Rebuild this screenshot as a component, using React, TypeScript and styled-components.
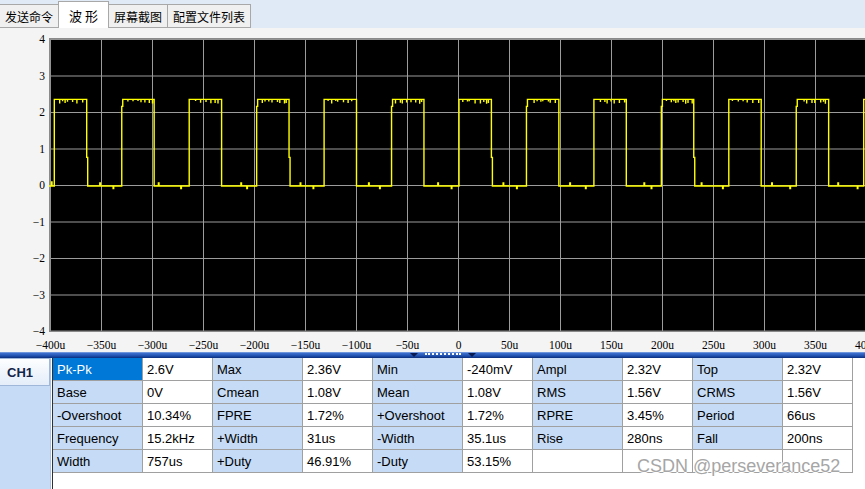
import React from 'react';
import styled, { createGlobalStyle } from 'styled-components';

const GlobalStyle = createGlobalStyle`
  html, body {
    margin: 0;
    padding: 0;
    overflow: hidden;
    background: #f4f4f4;
  }
`;

const Window = styled.div`
  width: 865px;
  height: 489px;
  display: flex;
  flex-direction: column;
  overflow: hidden;
  background: #f4f4f4;
  font-family: "Liberation Sans", Arial, sans-serif;
`;

const TabBar = styled.div`
  height: 28px;
  flex: none;
  display: flex;
  align-items: flex-end;
  background: #e0eaf7;
  box-sizing: border-box;
`;

const Tab = styled.div<{ $active?: boolean }>`
  height: ${p => (p.$active ? 27 : 24)}px;
  padding: 0 ${p => (p.$active ? 10 : 5)}px;
  margin-left: -1px;
  display: flex;
  align-items: center;
  box-sizing: border-box;
  background: ${p => (p.$active ? '#ffffff' : '#f0f0f0')};
  border: 1px solid #a8a8a8;
  border-bottom: ${p => (p.$active ? 'none' : '1px solid #a8a8a8')};
  font-family: "Noto Sans CJK SC", sans-serif;
  font-size: ${p => (p.$active ? 13 : 12)}px;
  color: #000;
  white-space: pre;
  position: relative;
  z-index: ${p => (p.$active ? 1 : 0)};
  &:first-child {
    margin-left: 0;
    border-left: none;
  }
`;

const ScopeArea = styled.div`
  height: 324px;
  flex: none;
  box-sizing: border-box;
  padding-top: 10px;
  display: grid;
  grid-template-columns: 49px 818px;
  grid-template-rows: 294px auto;
  overflow: hidden;
`;

const YAxis = styled.div`
  display: flex;
  flex-direction: column;
  margin-top: -16.75px;
`;

const AxisLabel = styled.div`
  font-family: "Liberation Serif", "Times New Roman", serif;
  font-size: 11.5px;
  color: #000;
  white-space: nowrap;
`;

const YLabel = styled(AxisLabel)`
  height: 36.5px;
  line-height: 36.5px;
  text-align: right;
  padding-right: 4px;
  flex: none;
`;

const XAxis = styled.div`
  grid-column: 1 / span 2;
  display: flex;
  margin-left: 25px;
  margin-top: 4px;
`;

const XLabel = styled(AxisLabel)`
  width: 51px;
  flex: none;
  text-align: center;
  line-height: 18px;
`;

const Plot = styled.svg`
  display: block;
  background: #000;
`;

const Splitter = styled.div`
  height: 6px;
  flex: none;
  display: flex;
  align-items: flex-end;
  padding-left: 410px;
  gap: 7px;
  background: linear-gradient(#9dbbea 0px, #3d70cf 1px, #2a5cbc 3px, #123e96 5px, #0b2d78 6px);
`;

const GripArrow = styled.div`
  width: 0;
  height: 0;
  margin-bottom: 1px;
  border-left: 4px solid transparent;
  border-right: 4px solid transparent;
  border-top: 4px solid #081a4f;
`;

const GripDots = styled.div`
  width: 36px;
  height: 3px;
  margin-bottom: 2px;
  border-top: 2px dotted #ffffff;
  box-sizing: border-box;
`;

const BottomPanel = styled.div`
  flex: 1;
  display: flex;
  background: #ffffff;
  position: relative;
`;

const Side = styled.div`
  width: 50px;
  flex: none;
  background: #c6dbf6;
  border-right: 1px solid #a9c2e4;
`;

const ChannelTab = styled.div`
  height: 28px;
  box-sizing: border-box;
  padding-left: 7px;
  display: flex;
  align-items: center;
  background: linear-gradient(#fdfeff, #e4edf9);
  border: 1px solid #9fb8da;
  border-left: none;
  font-weight: bold;
  font-size: 13px;
  color: #14254a;
`;

const TableWrap = styled.div`
  margin-left: 1px;
  border-left: 1px solid #303030;
  flex: 1;
`;

const Table = styled.div`
  display: grid;
  grid-template-columns: repeat(5, 90px 70px);
  grid-auto-rows: 23px;
`;

const Cell = styled.div<{ $kind: 'label' | 'value' | 'selected' | 'empty' }>`
  box-sizing: border-box;
  border-right: 1px solid #a0a0a0;
  border-bottom: 1px solid #a0a0a0;
  padding-left: 4px;
  display: flex;
  align-items: center;
  font-size: 13px;
  white-space: nowrap;
  color: ${p => (p.$kind === 'selected' ? '#ffffff' : '#000000')};
  background: ${p =>
    p.$kind === 'selected' ? '#0078d7' : p.$kind === 'label' ? '#c5dbf6' : '#ffffff'};
`;

const Watermark = styled.div`
  position: absolute;
  left: 637px;
  bottom: 13px;
  font-size: 18px;
  line-height: 20px;
  color: #a6a6a6;
  text-shadow: 0 0 1px #fff, 1px 0 0 #fff, -1px 0 0 #fff, 0 1px 0 #fff, 0 -1px 0 #fff;
  pointer-events: none;
`;

const X0 = 1.5;
const DX = 51;
const Y0 = 1.5;
const DY = 36.5;
const yOf = (v: number) => Y0 + (4 - v) * DY;

function buildWave(): string {
  let seed = 11;
  const rnd = () => {
    seed = (seed * 9301 + 49297) % 233280;
    return seed / 233280;
  };
  const hi = yOf(2.36);
  const lo = yOf(0) + 0.5;
  const period = 67.45;
  const width = 32.4;
  const start = 5.3;
  let d = `M0 ${lo} L2.5 ${lo} L2.5 ${lo - 4} L3 ${lo - 4} L3 ${lo}`;
  for (let k = 0; k < 13; k++) {
    let r = start + k * period;
    let f = r + width;
    d += ` L${r} ${lo}`;
    if (k % 2 === 1) {
      d += ` L${r} ${hi + 7} L${r + 1} ${hi + 7}`;
      r += 1;
    }
    d += ` L${r} ${hi}`;
    let x = r + 1;
    for (;;) {
      x += 1.5 + rnd() * 4.5;
      if (x >= f - 1.5) break;
      const t = 1.5 + rnd() * 3;
      d += ` L${x.toFixed(1)} ${hi} L${x.toFixed(1)} ${(hi + t).toFixed(1)} L${x.toFixed(1)} ${hi}`;
    }
    d += ` L${f} ${hi}`;
    if (k % 3 === 0) {
      d += ` L${f} ${hi + 58} L${f + 1} ${hi + 58}`;
      f += 1;
    }
    d += ` L${f} ${lo}`;
    const next = start + (k + 1) * period;
    const s1 = f + 3 + rnd() * 20;
    d += ` L${s1.toFixed(1)} ${lo} L${s1.toFixed(1)} ${lo - 3} L${(s1 + 0.6).toFixed(1)} ${lo - 3} L${(s1 + 0.6).toFixed(1)} ${lo}`;
    const s2 = next - 6 - rnd() * 6;
    d += ` L${s2.toFixed(1)} ${lo} L${s2.toFixed(1)} ${lo + 2.5} L${(s2 + 0.6).toFixed(1)} ${lo + 2.5} L${(s2 + 0.6).toFixed(1)} ${lo}`;
  }
  return d;
}

const wavePath = buildWave();

// the last label runs off the right edge, as in the source window
const xLabels = [
  '−400u', '−350u', '−300u', '−250u', '−200u', '−150u', '−100u', '−50u', '0',
  '50u', '100u', '150u', '200u', '250u', '300u', '350u', '400u',
];
const yLabels = ['4', '3', '2', '1', '0', '−1', '−2', '−3', '−4'];

type Row = [string, string, string, string, string, string, string, string, string, string];
const rows: Row[] = [
  ['Pk-Pk', '2.6V', 'Max', '2.36V', 'Min', '-240mV', 'Ampl', '2.32V', 'Top', '2.32V'],
  ['Base', '0V', 'Cmean', '1.08V', 'Mean', '1.08V', 'RMS', '1.56V', 'CRMS', '1.56V'],
  ['-Overshoot', '10.34%', 'FPRE', '1.72%', '+Overshoot', '1.72%', 'RPRE', '3.45%', 'Period', '66us'],
  ['Frequency', '15.2kHz', '+Width', '31us', '-Width', '35.1us', 'Rise', '280ns', 'Fall', '200ns'],
  ['Width', '757us', '+Duty', '46.91%', '-Duty', '53.15%', '', '', '', ''],
];

const ScopePlot: React.FC = () => (
  <Plot width={818} height={294} viewBox="0 0 818 294">
    {Array.from({ length: 17 }, (_, i) => (
      <line key={`v${i}`} x1={X0 + i * DX} y1={0} x2={X0 + i * DX} y2={294} stroke="#9c9c9c" strokeWidth={1} />
    ))}
    {Array.from({ length: 9 }, (_, i) => (
      <line key={`h${i}`} x1={0} y1={Y0 + i * DY} x2={818} y2={Y0 + i * DY} stroke="#9c9c9c" strokeWidth={1} />
    ))}
    <rect x={0.75} y={0.75} width={816.5} height={292.5} fill="none" stroke="#8a8a8a" strokeWidth={1.5} />
    <path d={wavePath} fill="none" stroke="#ffff00" strokeWidth={1.4} strokeLinejoin="miter" />
  </Plot>
);

const App: React.FC = () => (
  <Window>
    <GlobalStyle />
    <TabBar>
      <Tab>发送命令</Tab>
      <Tab $active>波 形</Tab>
      <Tab>屏幕截图</Tab>
      <Tab>配置文件列表</Tab>
    </TabBar>

    <ScopeArea>
      <YAxis>
        {yLabels.map(l => (
          <YLabel key={l}>{l}</YLabel>
        ))}
      </YAxis>
      <ScopePlot />
      <XAxis>
        {xLabels.map(l => (
          <XLabel key={l}>{l}</XLabel>
        ))}
      </XAxis>
    </ScopeArea>

    <Splitter>
      <GripArrow />
      <GripDots />
      <GripArrow />
    </Splitter>

    <BottomPanel>
      <Side>
        <ChannelTab>CH1</ChannelTab>
      </Side>
      <TableWrap>
        <Table>
          {rows.map((row, ri) =>
            row.map((text, ci) => {
              const kind =
                ri === 0 && ci === 0
                  ? 'selected'
                  : text === ''
                  ? 'empty'
                  : ci % 2 === 0
                  ? 'label'
                  : 'value';
              return (
                <Cell key={`${ri}-${ci}`} $kind={kind}>
                  {text}
                </Cell>
              );
            })
          )}
        </Table>
      </TableWrap>
      <Watermark>CSDN @perseverance52</Watermark>
    </BottomPanel>
  </Window>
);

export default App;
